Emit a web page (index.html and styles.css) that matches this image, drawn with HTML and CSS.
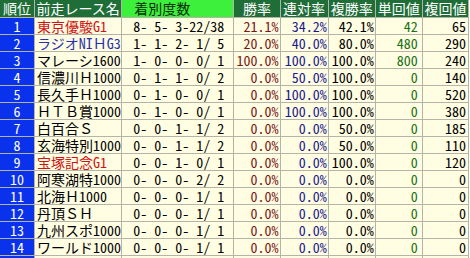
FILE: index.html
```html
<!DOCTYPE html>
<html lang="ja">
<head>
<meta charset="utf-8">
<link rel="stylesheet" href="styles.css">
</head>
<body>
<table class="stats">
  <colgroup>
    <col class="c-rank"><col class="c-race"><col class="c-rec"><col class="c-win"><col class="c-ren"><col class="c-fuku"><col class="c-tan"><col class="c-fkv">
  </colgroup>
  <thead>
    <tr>
      <th class="h-dark">順位</th>
      <th class="h-dark">前走レース名</th>
      <th class="h-light">着別度数</th>
      <th class="h-dark">勝率</th>
      <th class="h-dark">連対率</th>
      <th class="h-dark">複勝率</th>
      <th class="h-dark">単回値</th>
      <th class="h-dark">複回値</th>
    </tr>
  </thead>
  <tbody>
    <tr><td class="rank">1</td><td class="race red">東京優駿<span class="hw">G1</span></td><td class="rec">8- 5- 3-22/38</td><td class="win">21.1%</td><td class="ren">34.2%</td><td class="fuku">42.1%</td><td class="tan">42</td><td class="fkv">65</td></tr>
    <tr><td class="rank">2</td><td class="race blue">ラジオ<span class="hw">NI</span>Ｈ<span class="hw">G3</span></td><td class="rec">1- 1- 2- 1/ 5</td><td class="win">20.0%</td><td class="ren">40.0%</td><td class="fuku">80.0%</td><td class="tan">480</td><td class="fkv">290</td></tr>
    <tr><td class="rank">3</td><td class="race">マレーシ<span class="hw">1600</span></td><td class="rec">1- 0- 0- 0/ 1</td><td class="win">100.0%</td><td class="ren">100.0%</td><td class="fuku">100.0%</td><td class="tan">800</td><td class="fkv">240</td></tr>
    <tr><td class="rank">4</td><td class="race">信濃川Ｈ<span class="hw">1000</span></td><td class="rec">0- 1- 1- 0/ 2</td><td class="win">0.0%</td><td class="ren">50.0%</td><td class="fuku">100.0%</td><td class="tan">0</td><td class="fkv">140</td></tr>
    <tr><td class="rank">5</td><td class="race">長久手Ｈ<span class="hw">1000</span></td><td class="rec">0- 1- 0- 0/ 1</td><td class="win">0.0%</td><td class="ren">100.0%</td><td class="fuku">100.0%</td><td class="tan">0</td><td class="fkv">520</td></tr>
    <tr><td class="rank">6</td><td class="race">ＨＴＢ賞<span class="hw">1000</span></td><td class="rec">0- 1- 0- 0/ 1</td><td class="win">0.0%</td><td class="ren">100.0%</td><td class="fuku">100.0%</td><td class="tan">0</td><td class="fkv">380</td></tr>
    <tr><td class="rank">7</td><td class="race">白百合Ｓ</td><td class="rec">0- 0- 1- 1/ 2</td><td class="win">0.0%</td><td class="ren">0.0%</td><td class="fuku">50.0%</td><td class="tan">0</td><td class="fkv">185</td></tr>
    <tr><td class="rank">8</td><td class="race">玄海特別<span class="hw">1000</span></td><td class="rec">0- 0- 1- 1/ 2</td><td class="win">0.0%</td><td class="ren">0.0%</td><td class="fuku">50.0%</td><td class="tan">0</td><td class="fkv">110</td></tr>
    <tr><td class="rank">9</td><td class="race red">宝塚記念<span class="hw">G1</span></td><td class="rec">0- 0- 1- 0/ 1</td><td class="win">0.0%</td><td class="ren">0.0%</td><td class="fuku">100.0%</td><td class="tan">0</td><td class="fkv">120</td></tr>
    <tr><td class="rank">10</td><td class="race">阿寒湖特<span class="hw">1000</span></td><td class="rec">0- 0- 0- 2/ 2</td><td class="win">0.0%</td><td class="ren">0.0%</td><td class="fuku">0.0%</td><td class="tan">0</td><td class="fkv">0</td></tr>
    <tr><td class="rank">11</td><td class="race">北海Ｈ<span class="hw">1000</span></td><td class="rec">0- 0- 0- 1/ 1</td><td class="win">0.0%</td><td class="ren">0.0%</td><td class="fuku">0.0%</td><td class="tan">0</td><td class="fkv">0</td></tr>
    <tr><td class="rank">12</td><td class="race">丹頂ＳＨ</td><td class="rec">0- 0- 0- 1/ 1</td><td class="win">0.0%</td><td class="ren">0.0%</td><td class="fuku">0.0%</td><td class="tan">0</td><td class="fkv">0</td></tr>
    <tr><td class="rank">13</td><td class="race">九州スポ<span class="hw">1000</span></td><td class="rec">0- 0- 0- 1/ 1</td><td class="win">0.0%</td><td class="ren">0.0%</td><td class="fuku">0.0%</td><td class="tan">0</td><td class="fkv">0</td></tr>
    <tr><td class="rank">14</td><td class="race">ワールド<span class="hw">1000</span></td><td class="rec">0- 0- 0- 1/ 1</td><td class="win">0.0%</td><td class="ren">0.0%</td><td class="fuku">0.0%</td><td class="tan">0</td><td class="fkv">0</td></tr>
    <tr class="cut"><td class="blank"></td><td></td><td></td><td></td><td></td><td></td><td></td><td></td></tr>
  </tbody>
</table>
</body>
</html>
```

FILE: styles.css
```css
html, body {
  margin: 0;
  padding: 0;
  background: #ffffff;
  overflow: hidden;
}

.stats {
  margin: -1px 0 0 -1px;
  border-collapse: separate;
  border-spacing: 1px;
  background: #b4b4a8;
  table-layout: fixed;
  width: 470px;
  font-family: "Noto Sans CJK JP", sans-serif;
  font-size: 14px;
  color: #000;
}

.c-rank { width: 34px; }
.c-race { width: 86px; }
.c-rec  { width: 111px; }
.c-win  { width: 45px; }
.c-ren  { width: 47px; }
.c-fuku { width: 46px; }
.c-tan  { width: 46px; }
.c-fkv  { width: 45px; }

th, td {
  padding: 0;
  white-space: pre;
  overflow: hidden;
}

th {
  height: 17px;
  line-height: 17px;
  font-weight: normal;
  text-align: center;
}

.h-dark {
  background: #1f6e37;
  color: #ffffff;
}

.h-light {
  background: #3cf03c;
  color: #0a2a0a;
  text-align: left;
  padding-left: 12px;
}

td {
  height: 16px;
  line-height: 16px;
  background: #fffde2;
}

.hw,
td.rank,
td.rec,
td.win,
td.ren,
td.fuku,
td.tan,
td.fkv {
  font-feature-settings: "hwid";
}

td.rank {
  background: #0a32ec;
  color: #ffffff;
  text-align: center;
}

td.race { padding-left: 2px; }
td.red { color: #d01414; }
td.blue { color: #2630b0; }

td.rec { padding-left: 11px; }

td.win { text-align: right; padding-right: 1px; color: #7a1616; }
td.ren { text-align: right; padding-right: 1px; color: #1a1a8c; }
td.fuku { text-align: right; padding-right: 1px; }
td.tan { text-align: right; padding-right: 4px; color: #167016; }
td.fkv { text-align: right; padding-right: 2px; }

td.blank { background: #0a32ec; }
```
